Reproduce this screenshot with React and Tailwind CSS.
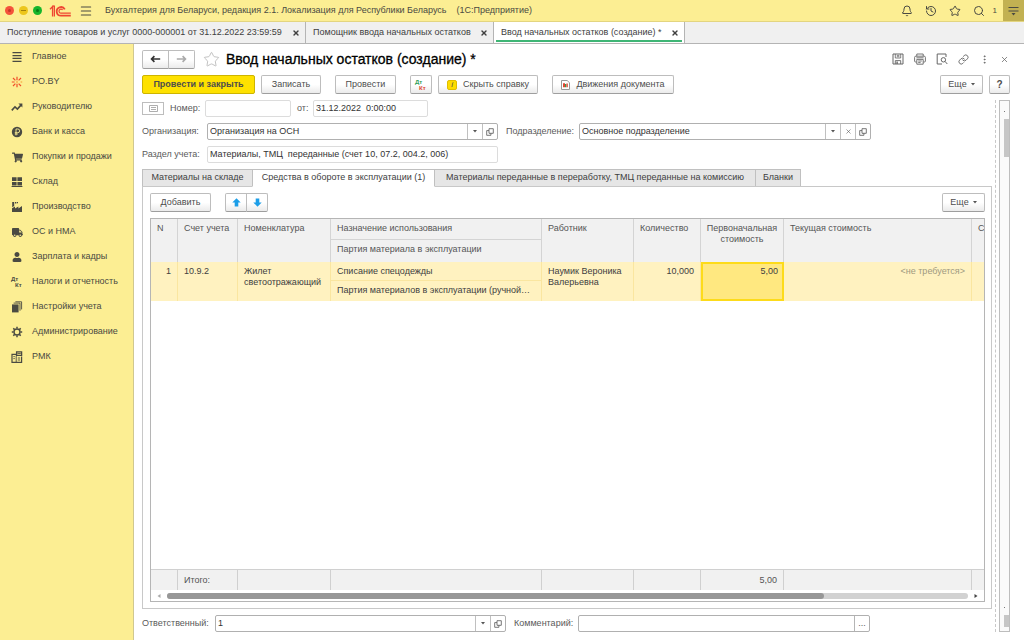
import { Bell, History, Star, Search, Menu, Link, EllipsisVertical, X } from 'lucide-react';
import { FaShoppingCart, FaTruck, FaUser } from 'react-icons/fa';

/* ---------- Icons ---------- */

function LogoIcon() {
  return (
    <svg className="w-[22px] h-3" viewBox="0 0 22 12" fill="none" stroke="#ee4632">
      <path d="M1 4.2 L3.6 1.6 V11.4" strokeWidth="1.4" />
      <path d="M3.4 1.2 H5.4 V11.4" strokeWidth="1.2" />
      <path d="M15.8 4.4 A4.3 4.3 0 1 0 12 10.7 H21.8" strokeWidth="1.8" />
      <path d="M13.6 5 A2 2 0 1 0 12 8.2 H21.8" strokeWidth="1.2" />
    </svg>
  );
}

function LinesIcon() {
  return (
    <svg className="w-3 h-3" viewBox="0 0 12 12" fill="#4a4a42">
      <path d="M1.5 1h9v1.3h-9zM1.5 3.9h9v1.3h-9zM1.5 6.8h9v1.3h-9zM1.5 9.7h9v1.3h-9z" />
    </svg>
  );
}

function SparkIcon() {
  return (
    <svg className="w-3 h-3" viewBox="0 0 12 12" stroke="#f04e2a" strokeWidth="1.2" fill="none">
      <path d="M6 .8v3.4M6 7.8v3.4M.8 6h2.8M2 2l2.4 2.4M10 2L7.6 4.4M2 10l2.4-2.4M10 10L7.6 7.6" />
      <path d="M9.6 6h1.6M5 6h2" stroke="#f49a30" />
    </svg>
  );
}

function TrendIcon() {
  return (
    <svg className="w-3 h-3" viewBox="0 0 12 12" fill="none" stroke="#4a4a42" strokeWidth="1.6">
      <path d="M.8 9.4L4 5.8l2.4 2.2 4-4.4" />
      <path d="M7.4 2.6h4v4z" fill="#4a4a42" stroke="none" />
    </svg>
  );
}

function CoinIcon() {
  return (
    <svg className="w-3 h-3" viewBox="0 0 12 12">
      <circle cx="6" cy="6" r="5.2" fill="#4a4a42" />
      <path d="M5 9.4V3h1.8a1.8 1.8 0 0 1 0 3.7H3.8M3.8 8h3" fill="none" stroke="#fcee93" strokeWidth=".9" />
    </svg>
  );
}

function StoreIcon() {
  return (
    <svg className="w-3 h-3" viewBox="0 0 12 12" fill="#4a4a42">
      <path d="M1 1.2h4.6v3.9H1zM6.4 1.2H11v3.9H6.4zM1 5.9h4.6v3.5H1zM6.4 5.9H11v3.5H6.4zM.6 10h10.8v1H.6z" />
    </svg>
  );
}

function FactoryIcon() {
  return (
    <svg className="w-3 h-3" viewBox="0 0 12 12" fill="#4a4a42">
      <path d="M1 11V7.2L4 5.6v1.8L7.4 5.4v2L11 5v6z" />
      <path d="M1.2 1h2v4l-2 1.2zM4 1h1.4v1.6H4zM6 1h1v1.2H6z" />
    </svg>
  );
}

function DtKtIcon({ dt = '#4a4a42', kt = '#4a4a42' }) {
  return (
    <svg className="w-[14px] h-[14px]" viewBox="0 0 14 14" fontFamily="Liberation Sans, sans-serif" fontWeight="bold" fontSize="6">
      <text x="1" y="6" fill={dt}>Дт</text>
      <text x="5" y="12" fill={kt}>Кт</text>
    </svg>
  );
}

function BooksIcon() {
  return (
    <svg className="w-3 h-3" viewBox="0 0 12 12">
      <path d="M1 3.4h6.6v8H1z" fill="#4a4a42" />
      <path d="M2.6 2.1h6.4v7.6M4.4.8h6.2v7.6" fill="none" stroke="#4a4a42" strokeWidth=".9" />
    </svg>
  );
}

function GearIcon() {
  return (
    <svg className="w-3 h-3" viewBox="0 0 12 12" fill="none" stroke="#4a4a42">
      <circle cx="6" cy="6" r="3" strokeWidth="1.4" />
      <path d="M6 .8v1.8M6 9.4v1.8M.8 6h1.8M9.4 6h1.8M2.3 2.3l1.3 1.3M8.4 8.4l1.3 1.3M9.7 2.3L8.4 3.6M3.6 8.4L2.3 9.7" strokeWidth="1.5" />
    </svg>
  );
}

function CashboxIcon() {
  return (
    <svg className="w-3 h-3" viewBox="0 0 12 12" fill="none" stroke="#4a4a42">
      <path d="M5 3.4H1v7.9h9.6V5.6" strokeWidth="1.2" />
      <path d="M5.6.9h5v3.4h-5z" strokeWidth="1.3" />
      <path d="M6.4 2.4h3.4M5.2 4.6v6.4M2.4 5.6h1.4M2.4 7.6h1.4M6.8 7h2.4M6.8 9h2.4" strokeWidth=".9" />
    </svg>
  );
}

function OpenIcon() {
  return (
    <svg className="w-2 h-2" viewBox="0 0 8 8" fill="none" stroke="#555" strokeWidth=".8">
      <path d="M3 .7h4.3v4.6H3z" />
      <path d="M3 2.6H.7v4.7h4.2v-2" />
    </svg>
  );
}

function CaretIcon() {
  return (
    <svg className="w-1 h-[3px]" viewBox="0 0 4 3" fill="#555">
      <path d="M0 0h4L2 2.6z" />
    </svg>
  );
}

function ArrowIcon({ className, color }) {
  return (
    <svg className={`w-[11px] h-2 ${className || ''}`} viewBox="0 0 11 8" fill="none" stroke={color} strokeWidth="1.7">
      <path d="M10.2 4H2M4.4 1.2L1.6 4l2.8 2.8" />
    </svg>
  );
}

function MoveIcon({ className }) {
  return (
    <svg className={`w-[9px] h-[9px] ${className || ''}`} viewBox="0 0 9 9" fill="#1c9ee8">
      <path d="M4.5 .3L8.7 4.6H6.3v4H2.7v-4H.3z" />
    </svg>
  );
}

function DiskIcon() {
  return (
    <svg className="w-3 h-3" viewBox="0 0 12 12" fill="none" stroke="#666" strokeWidth="1">
      <path d="M1 1h10v10H1z" />
      <path d="M3.3 1v4h5.4V1M4.8 2.4h2.6M4.8 3.7h2.6" strokeWidth=".8" />
      <path d="M3.3 11V7.6h5.4V11" strokeWidth=".9" />
      <path d="M4.4 8.6h1.4V11H4.4z" fill="#666" stroke="none" />
    </svg>
  );
}

function PrinterIcon() {
  return (
    <svg className="w-3 h-3" viewBox="0 0 12 12" fill="none" stroke="#666" strokeWidth=".9">
      <path d="M2.8 3.2V1h6.4v2.2" />
      <path d="M2.6 9H1.6a1 1 0 0 1-1-1V4.4a1.2 1.2 0 0 1 1.2-1.2h8.4a1.2 1.2 0 0 1 1.2 1.2V8a1 1 0 0 1-1 1h-1" />
      <path d="M2.8 6.4h6.4v4.8H2.8zM2.4 4.8h7.2M4.2 8h3.6M4.2 9.6h2.4" />
    </svg>
  );
}

function PreviewIcon() {
  return (
    <svg className="w-3 h-3" viewBox="0 0 12 12" fill="none" stroke="#666" strokeWidth="1">
      <path d="M10 4V1H1.2v10H6" />
      <circle cx="7.4" cy="6.8" r="2.2" />
      <path d="M9 8.4l2.3 2.6" />
    </svg>
  );
}

function ReportIcon() {
  return (
    <svg className="w-[9px] h-[10px]" viewBox="0 0 9 10" fill="none">
      <path d="M.5.5h5.6l2.4 2.2v6.8h-8z" fill="#fff" stroke="#999" />
      <path d="M2 3.2h2v4H2z" fill="#e0452f" />
      <path d="M4 4h1.2v3.2H4z" fill="#2f9e55" />
      <path d="M5.4 3.6h1.4v3.6H5.4z" fill="#e0452f" />
    </svg>
  );
}

/* ---------- Shared controls ---------- */

const buttonStyle =
  'h-[19px] flex items-center justify-center whitespace-nowrap rounded-[2px] border border-[#bdbdbd] border-b-[#9e9e9e] bg-linear-to-b from-white from-50% to-[#ebebeb] text-[#4d4d4d]';

function Button({ className, children, ...rest }) {
  return (
    <button type="button" className={`${buttonStyle} ${className || ''}`} {...rest}>
      {children}
    </button>
  );
}

function Combo({ id, value, clearable, className }) {
  const cell = 'w-[15px] shrink-0 flex items-center justify-center border-l border-[#c0c0c0]';
  return (
    <div className={`h-[17px] flex rounded-[2px] border border-[#b0b0b0] bg-white ${className || ''}`}>
      <input id={id} defaultValue={value} className="flex-1 min-w-0 px-0.5 text-[#333] outline-none" />
      <button type="button" aria-label="Выбрать" className={cell}><CaretIcon /></button>
      {clearable && (
        <button type="button" aria-label="Очистить" className={cell}><X size={7} color="#555" /></button>
      )}
      <button type="button" aria-label="Открыть" className={cell}><OpenIcon /></button>
    </div>
  );
}

const plainInput = 'h-[17px] rounded-[2px] border border-[#dcdcdc] bg-white px-0.5 pb-px text-[#333] outline-none';

/* ---------- Data ---------- */

const menu = [
  { label: 'Главное', icon: <LinesIcon /> },
  { label: 'PO.BY', icon: <SparkIcon /> },
  { label: 'Руководителю', icon: <TrendIcon /> },
  { label: 'Банк и касса', icon: <CoinIcon /> },
  { label: 'Покупки и продажи', icon: <FaShoppingCart size={11} /> },
  { label: 'Склад', icon: <StoreIcon /> },
  { label: 'Производство', icon: <FactoryIcon /> },
  { label: 'ОС и НМА', icon: <FaTruck size={11} /> },
  { label: 'Зарплата и кадры', icon: <FaUser size={10} /> },
  { label: 'Налоги и отчетность', icon: <DtKtIcon /> },
  { label: 'Настройки учета', icon: <BooksIcon /> },
  { label: 'Администрирование', icon: <GearIcon /> },
  { label: 'РМК', icon: <CashboxIcon /> },
];

const windows = [
  { label: 'Поступление товаров и услуг 0000-000001 от 31.12.2022 23:59:59', width: 'w-[306px]' },
  { label: 'Помощник ввода начальных остатков', width: 'w-[188px]' },
  { label: 'Ввод начальных остатков (создание) *', width: 'w-[191px]', active: true },
];

const sections = [
  { label: 'Материалы на складе', width: 'w-[111px]' },
  { label: 'Средства в обороте в эксплуатации (1)', width: 'w-[183px]', active: true },
  { label: 'Материалы переданные в переработку, ТМЦ переданные на комиссию', width: 'w-[322px]' },
  { label: 'Бланки', width: 'w-[46px]' },
];

/* ---------- Page parts ---------- */

function TopBar() {
  return (
    <header className="h-[22px] shrink-0 flex items-center bg-[#fcee93] border-b border-[#e3d580] text-[#4a4a42]">
      <div className="flex items-center gap-[5px] pl-[5px]">
        <span className="w-[9px] h-[9px] rounded-full bg-[#f4523b] flex items-center justify-center"><i className="w-[3px] h-[3px] rounded-full bg-[#c23a28]" /></span>
        <span className="w-[9px] h-[9px] rounded-full bg-[#ecc61c] flex items-center justify-center"><i className="w-[5px] h-px bg-[#a3830d]" /></span>
        <span className="w-[9px] h-[9px] rounded-full bg-[#16b52b] flex items-center justify-center"><i className="w-[3px] h-[3px] rounded-full bg-[#0a7a18]" /></span>
      </div>
      <div className="ml-[7px]"><LogoIcon /></div>
      <button type="button" aria-label="Меню" className="ml-2"><Menu size={14} strokeWidth={1.8} /></button>
      <h1 className="ml-3 text-[9px] whitespace-pre">Бухгалтерия для Беларуси, редакция 2.1. Локализация для Республики Беларусь    (1С:Предприятие)</h1>
      <div className="ml-auto h-full flex items-center gap-3">
        <button type="button" aria-label="Уведомления"><Bell size={12} /></button>
        <button type="button" aria-label="История"><History size={12} /></button>
        <button type="button" aria-label="Избранное"><Star size={12} /></button>
        <button type="button" aria-label="Поиск"><Search size={12} /></button>
        <span className="-ml-1 text-[8px]">1</span>
        <button type="button" aria-label="Настройки" className="-ml-1.5 w-[21px] h-full flex items-center justify-center bg-[#c2b152]">
          <svg className="w-[11px] h-[10px]" viewBox="0 0 11 10">
            <path d="M.5 1.5h10M.5 5h10" stroke="#4a4a42" />
            <path d="M3.5 7h4L5.5 9.4z" fill="#4a4a42" />
          </svg>
        </button>
      </div>
    </header>
  );
}

function WindowTabs() {
  return (
    <nav className="h-[22px] shrink-0 flex bg-[#f0f0f0] border-b border-[#b4b4b4] text-[9px] text-[#404040]">
      {windows.map((w) => (
        <div
          key={w.label}
          className={`relative flex items-center justify-between pl-[7px] pr-[5px] border-r border-[#b4b4b4] whitespace-nowrap ${w.width} ${w.active ? 'bg-white' : ''}`}
        >
          <button type="button">{w.label}</button>
          <button type="button" aria-label="Закрыть"><X size={8} strokeWidth={4} /></button>
          {w.active && <span className="absolute left-0.5 right-0.5 bottom-px h-0.5 bg-[#3fb575]" />}
        </div>
      ))}
    </nav>
  );
}

function Sidebar() {
  return (
    <aside className="w-[134px] shrink-0 bg-[#fcee93] border-r border-[#d0c890] text-[9px] text-[#4a4a42]">
      <ul>
        {menu.map((item) => (
          <li key={item.label}>
            <a href="#" className="h-[25px] flex items-center gap-2 pl-2.5 pt-px whitespace-nowrap">
              <span className="w-[14px] flex justify-center">{item.icon}</span>
              {item.label}
            </a>
          </li>
        ))}
      </ul>
    </aside>
  );
}

function TitleRow() {
  return (
    <div className="h-[18px] flex items-center">
      <div className="flex">
        <Button aria-label="Назад" className="w-[27px] rounded-r-none"><ArrowIcon color="#333" /></Button>
        <Button aria-label="Вперед" className="w-[27px] -ml-px rounded-l-none"><ArrowIcon color="#aaa" className="rotate-180" /></Button>
      </div>
      <Star size={17} strokeWidth={1} color="#a8a8a8" className="ml-2" />
      <h2 className="ml-1.5 text-[14px] text-black whitespace-nowrap [-webkit-text-stroke:0.3px_black]">Ввод начальных остатков (создание) *</h2>
      <div className="ml-auto flex items-center gap-2.5 pr-px text-[#666]">
        <button type="button" aria-label="Сохранить"><DiskIcon /></button>
        <button type="button" aria-label="Печать"><PrinterIcon /></button>
        <button type="button" aria-label="Просмотр"><PreviewIcon /></button>
        <button type="button" aria-label="Ссылка"><Link size={11} /></button>
        <button type="button" aria-label="Дополнительно"><EllipsisVertical size={11} /></button>
        <button type="button" aria-label="Закрыть"><X size={9} /></button>
      </div>
    </div>
  );
}

function CommandBar() {
  return (
    <div className="mt-[7px] flex items-center text-[9px]">
      <button type="button" className="h-[19px] w-[113px] rounded-[2px] border border-[#cdb400] bg-[#fee100] font-bold text-[#4d4d4d] whitespace-nowrap">
        Провести и закрыть
      </button>
      <Button className="ml-1.5 w-[60px]">Записать</Button>
      <Button className="ml-3.5 w-[61px]">Провести</Button>
      <Button aria-label="Дт/Кт" className="ml-3.5 w-[22px]"><DtKtIcon dt="#2f9e55" kt="#e0452f" /></Button>
      <Button className="ml-1.5 w-[100px] gap-1.5">
        <span className="w-[10px] h-[10px] rounded-[2px] bg-[#fddc00] border border-[#e0bd00] text-[8px] leading-[8px] italic">i</span>
        Скрыть справку
      </Button>
      <Button className="ml-3.5 w-[122px] gap-1.5">
        <ReportIcon />
        Движения документа
      </Button>
      <Button className="ml-auto w-[43px] gap-1">Еще <CaretIcon /></Button>
      <Button className="ml-1.5 w-[21px] text-[10px] font-bold">?</Button>
    </div>
  );
}

function ItemsTable() {
  const head = 'border-r border-[#d4d4d4] px-1.5 pt-1 align-top text-left font-normal';
  const cell = 'border-r border-[#fae6a0] px-1.5 pt-1 align-top';
  const foot = 'border-r border-t border-[#d0d0d0] px-1.5';
  return (
    <div className="flex-1 min-h-0 mt-1.5 flex flex-col border border-[#b5b5b5]">
      <div className="flex-1 min-h-0 overflow-hidden">
        <table className="w-full h-full table-fixed border-separate border-spacing-0 text-[9px] leading-[11px]">
          <colgroup>
            <col className="w-[27px]" />
            <col className="w-[60px]" />
            <col className="w-[93px]" />
            <col className="w-[211px]" />
            <col className="w-[92px]" />
            <col className="w-[67px]" />
            <col className="w-[83px]" />
            <col />
            <col className="w-[12px]" />
          </colgroup>
          <thead className="bg-[#f1f1f1] text-[#555]">
            <tr className="h-[21px]">
              <th rowSpan={2} className={head}>N</th>
              <th rowSpan={2} className={head}>Счет учета</th>
              <th rowSpan={2} className={head}>Номенклатура</th>
              <th className={`${head} border-b`}>Назначение использования</th>
              <th rowSpan={2} className={head}>Работник</th>
              <th rowSpan={2} className={head}>Количество</th>
              <th rowSpan={2} className="border-r border-[#d4d4d4] pt-1 align-top text-center font-normal">Первоначальная стоимость</th>
              <th rowSpan={2} className={head}>Текущая стоимость</th>
              <th rowSpan={2} className="pl-1.5 pt-1 align-top text-left font-normal overflow-hidden">С</th>
            </tr>
            <tr className="h-[22px]">
              <th className={head}>Партия материала в эксплуатации</th>
            </tr>
          </thead>
          <tbody className="text-[#404040]">
            <tr className="h-[19px] bg-[#fff2c0]">
              <td rowSpan={2} className={`${cell} text-right`}>1</td>
              <td rowSpan={2} className={cell}>10.9.2</td>
              <td rowSpan={2} className={cell}>Жилет светоотражающий</td>
              <td className={`${cell} border-b`}>Списание спецодежды</td>
              <td rowSpan={2} className={cell}>Наумик Вероника Валерьевна</td>
              <td rowSpan={2} className={`${cell} text-right`}>10,000</td>
              <td rowSpan={2} className="border-2 border-[#fddb1a] bg-[#ffe880] px-1 pt-0.5 align-top text-right">5,00</td>
              <td rowSpan={2} className={`${cell} text-right text-[#a09a80]`}>&lt;не требуется&gt;</td>
              <td rowSpan={2} />
            </tr>
            <tr className="h-[20px] bg-[#fff2c0]">
              <td className={`${cell} whitespace-nowrap`}>Партия материалов в эксплуатации (ручной…</td>
            </tr>
            <tr className="h-full">
              <td colSpan={9} />
            </tr>
          </tbody>
          <tfoot className="bg-[#f1f1f1] text-[#555]">
            <tr className="h-[21px]">
              <td className={foot} />
              <td className={foot}>Итого:</td>
              <td className={foot} />
              <td className={foot} />
              <td className={foot} />
              <td className={foot} />
              <td className={`${foot} text-right`}>5,00</td>
              <td className={foot} />
              <td className="border-t border-[#d0d0d0]" />
            </tr>
          </tfoot>
        </table>
      </div>
      {/* Horizontal scroll */}
      <div className="h-[11px] shrink-0 flex items-center px-1.5 gap-1.5">
        <svg className="w-1 h-1" viewBox="0 0 4 4" fill="#aaa"><path d="M3.5 0v4L.5 2z" /></svg>
        <div className="flex-1 h-1.5 rounded-full bg-[#d2d2d2]">
          <div className="w-[82%] h-full rounded-full bg-[#979797]" />
        </div>
        <svg className="w-1 h-1" viewBox="0 0 4 4" fill="#444"><path d="M.5 0v4l3-2z" /></svg>
      </div>
    </div>
  );
}

export default function App() {
  return (
    <div className="h-screen flex flex-col overflow-hidden bg-white font-['Liberation_Sans',Arial,sans-serif]">
      <TopBar />
      <WindowTabs />

      <div className="flex-1 min-h-0 flex">
        <Sidebar />

        <main className="flex-1 min-w-0 flex flex-col pl-2 pr-3.5 pt-1.5 pb-2">
          <TitleRow />
          <CommandBar />

          <div className="flex-1 min-h-0 flex mt-1.5">
            {/* Document form */}
            <form className="flex-1 min-w-0 flex flex-col border-r border-dashed border-[#c8c8c8] pr-[3px] text-[9px] text-[#5a5a5a]">
              <div className="flex items-center">
                <button type="button" aria-label="Состояние" className="w-[22px] h-[13px] flex items-center justify-center border border-[#bdbdbd]">
                  <svg className="w-[9px] h-[7px]" viewBox="0 0 9 7" fill="none" stroke="#999">
                    <path d="M.5.5h8v6h-8zM2 2.5h5M2 4.5h5" strokeWidth=".8" />
                  </svg>
                </button>
                <label htmlFor="number" className="ml-1.5 w-[35px]">Номер:</label>
                <input id="number" className={`${plainInput} w-[86px]`} />
                <label htmlFor="date" className="ml-1.5 w-4">от:</label>
                <input id="date" defaultValue="31.12.2022  0:00:00" className={`${plainInput} w-[115px]`} />
              </div>

              <div className="mt-1.5 flex items-center">
                <label htmlFor="org" className="w-[65px] shrink-0">Организация:</label>
                <Combo id="org" value="Организация на ОСН" className="flex-1 max-w-[291px]" />
                <label htmlFor="dept" className="ml-2 w-[73px] shrink-0">Подразделение:</label>
                <Combo id="dept" value="Основное подразделение" clearable className="flex-1 max-w-[292px]" />
              </div>

              <div className="mt-1.5 flex items-center">
                <label htmlFor="section" className="w-[65px] shrink-0 whitespace-nowrap">Раздел учета:</label>
                <input id="section" defaultValue="Материалы, ТМЦ  переданные (счет 10, 07.2, 004.2, 006)" className={`${plainInput} flex-1 max-w-[291px]`} />
              </div>

              {/* Section tabs */}
              <div className="mt-1.5 flex text-[#404040]">
                {sections.map((s) => (
                  <button
                    key={s.label}
                    type="button"
                    className={`h-[18px] -mr-px border border-[#c0c0c0] whitespace-nowrap ${s.width} ${s.active ? 'relative z-10 bg-white border-b-white' : 'bg-[#e6e6e6]'}`}
                  >
                    {s.label}
                  </button>
                ))}
              </div>

              <div className="flex-1 min-h-0 -mt-px flex flex-col border border-[#c8c8c8] pl-[7px] pr-1.5 py-1.5">
                <div className="flex text-[9px]">
                  <Button className="w-[61px]">Добавить</Button>
                  <Button aria-label="Вверх" className="ml-3.5 w-[22px] rounded-r-none"><MoveIcon /></Button>
                  <Button aria-label="Вниз" className="-ml-px w-[22px] rounded-l-none"><MoveIcon className="rotate-180" /></Button>
                  <Button className="ml-auto w-[43px] gap-1">Еще <CaretIcon /></Button>
                </div>
                <ItemsTable />
              </div>

              <div className="mt-1.5 flex items-center">
                <label htmlFor="owner" className="w-[73px] shrink-0">Ответственный:</label>
                <Combo id="owner" value="1" className="flex-1 max-w-[291px]" />
                <label htmlFor="comment" className="ml-2 w-[64px] shrink-0">Комментарий:</label>
                <div className="h-[17px] flex-1 max-w-[292px] flex rounded-[2px] border border-[#b0b0b0]">
                  <input id="comment" className="flex-1 min-w-0 px-0.5 outline-none" />
                  <button type="button" className="w-[15px] border-l border-[#b5b5b5]">...</button>
                </div>
              </div>
            </form>

            {/* Vertical scroll */}
            <div className="ml-[3px] w-[11px] flex flex-col items-end border border-[#bdbdbd] bg-[#fafafa] pt-2.5 pb-1">
              <i className="mr-1 w-px h-px bg-[#777]" />
              <div className="mt-[7px] w-[5px] h-[38px] bg-[#c6c6c6]" />
              <i className="mt-auto mr-1 w-px h-px bg-[#777]" />
              <div className="mt-[7px] w-[5px] h-3 bg-[#c6c6c6]" />
            </div>
          </div>
        </main>
      </div>
    </div>
  );
}
